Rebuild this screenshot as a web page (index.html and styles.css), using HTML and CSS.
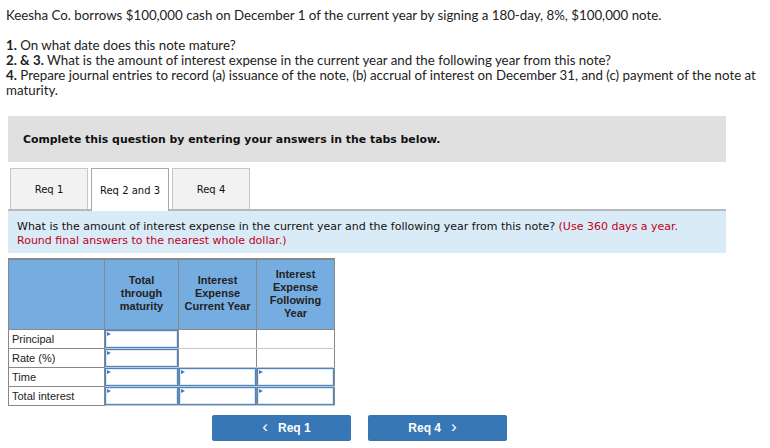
FILE: index.html
```html
<!DOCTYPE html>
<html>
<head>
    <meta charset="UTF-8">
    <title>Notes Payable</title>
    <link rel="stylesheet" href="styles.css">
</head>
<body>
    <div class="question">
        <p>Keesha Co. borrows $100,000 cash on December 1 of the current year by signing a 180-day, 8%, $100,000 note.</p>
        <p>
            <b>1.</b> On what date does this note mature?<br>
            <b>2. &amp; 3.</b> What is the amount of interest expense in the current year and the following year from this note?<br>
            <b>4.</b> Prepare journal entries to record (a) issuance of the note, (b) accrual of interest on December 31, and (c) payment of the note at maturity.
        </p>
    </div>

    <div class="panel">
        <div class="instructions">Complete this question by entering your answers in the tabs below.</div>

        <div class="tabs">
            <div class="tab">Req 1</div>
            <div class="tab active">Req 2 and 3</div>
            <div class="tab">Req 4</div>
        </div>

        <div class="prompt">
            What is the amount of interest expense in the current year and the following year from this note? <span class="hint">(Use 360 days a year. Round final answers to the nearest whole dollar.)</span>
        </div>

        <table class="grid">
            <tr class="head">
                <th class="label"></th>
                <th>Total<br>through<br>maturity</th>
                <th>Interest<br>Expense<br>Current Year</th>
                <th>Interest<br>Expense<br>Following<br>Year</th>
            </tr>
            <tr>
                <td class="label">Principal</td>
                <td class="input"></td>
                <td></td>
                <td></td>
            </tr>
            <tr>
                <td class="label">Rate (%)</td>
                <td class="input"></td>
                <td></td>
                <td></td>
            </tr>
            <tr>
                <td class="label">Time</td>
                <td class="input"></td>
                <td class="input"></td>
                <td class="input"></td>
            </tr>
            <tr>
                <td class="label">Total interest</td>
                <td class="input"></td>
                <td class="input"></td>
                <td class="input"></td>
            </tr>
        </table>

        <div class="nav">
            <button class="nav-btn"><span class="chev">&lsaquo;</span> Req 1</button>
            <button class="nav-btn">Req 4 <span class="chev">&rsaquo;</span></button>
        </div>
    </div>
</body>
</html>
```

FILE: styles.css
```css
body {
    margin: 0;
    padding: 8px 6px 0 6px;
    background: #fff;
    color: #222;
    font-family: Lato, "Liberation Sans", sans-serif;
}

.question p {
    margin: 0 0 15px 0;
    font-size: 13.3px;
    line-height: 15px;
}

.question b {
    font-weight: bold;
}

.panel {
    width: 718px;
    margin: 18px 0 0 2px;
}

.instructions {
    background: #e0e0e0;
    height: 46px;
    padding: 0 0 0 15px;
    display: flex;
    align-items: center;
    font-family: "DejaVu Sans", Verdana, sans-serif;
    font-size: 10.9px;
    font-weight: bold;
    color: #111;
    box-sizing: border-box;
}

.tabs {
    display: flex;
    gap: 3px;
    padding: 6px 0 0 2px;
}

.tab {
    width: 78px;
    height: 41px;
    box-sizing: border-box;
    background: #f2f2f2;
    border: 1px solid #c6c6c6;
    border-bottom: none;
    display: flex;
    align-items: center;
    justify-content: center;
    font-family: "DejaVu Sans", Verdana, sans-serif;
    font-size: 10px;
    color: #111;
}

.tab.active {
    background: #fff;
    border: 1px solid #a8a8a8;
    border-bottom: none;
    height: 43px;
    margin-bottom: -2px;
    position: relative;
}

.prompt {
    background: #d9ebf7;
    border-top: 2px solid #b8b8b8;
    padding: 9px 40px 6px 9px;
    height: 44px;
    box-sizing: border-box;
    font-family: "DejaVu Sans", Verdana, sans-serif;
    font-size: 11px;
    line-height: 14px;
    color: #111;
}

.hint {
    color: #c00020;
}

.grid {
    margin-top: 5px;
    border-collapse: collapse;
    border-top: 2px solid #888;
    font-family: "Liberation Sans", Arial, sans-serif;
    font-size: 11px;
}

.grid th,
.grid td {
    border: 1px solid #8a8a8a;
    padding: 0;
}

.grid th {
    background: #76ade0;
    height: 67px;
    font-weight: bold;
    color: #222;
    line-height: 13px;
    text-align: center;
    vertical-align: middle;
    width: 77px;
    padding-bottom: 2px;
}

.grid th:nth-child(2) {
    width: 73px;
}

.grid th:nth-child(3) {
    width: 77px;
}

.grid th.label {
    width: 95px;
}

.grid td {
    height: 18px;
    background: #fff;
    border-color: #888 #888 #c8c8c8 #888;
}

.grid td.label {
    padding-left: 3px;
    color: #222;
    border-bottom-color: #888;
}

.grid td.input {
    position: relative;
    box-shadow: inset 0 0 0 1px #4a86c6, inset 0 0 0 2px #dfe8f2;
}

.grid td.input::before {
    content: "";
    position: absolute;
    left: 2px;
    top: 2px;
    border-left: 4px solid #3a7bc8;
    border-top: 2.5px solid transparent;
    border-bottom: 2.5px solid transparent;
}

.nav {
    display: flex;
    gap: 17px;
    padding: 9px 0 0 204px;
}

.nav-btn {
    width: 139px;
    height: 26px;
    background: #3777b5;
    border: none;
    border-radius: 2px;
    color: #fff;
    font-family: "Liberation Sans", Arial, sans-serif;
    font-weight: bold;
    font-size: 12px;
    display: flex;
    align-items: center;
    justify-content: center;
    gap: 0;
    padding: 0;
}

.chev {
    font-weight: normal;
    font-size: 17px;
    margin: -2px 10px 0 10px;
}
```
